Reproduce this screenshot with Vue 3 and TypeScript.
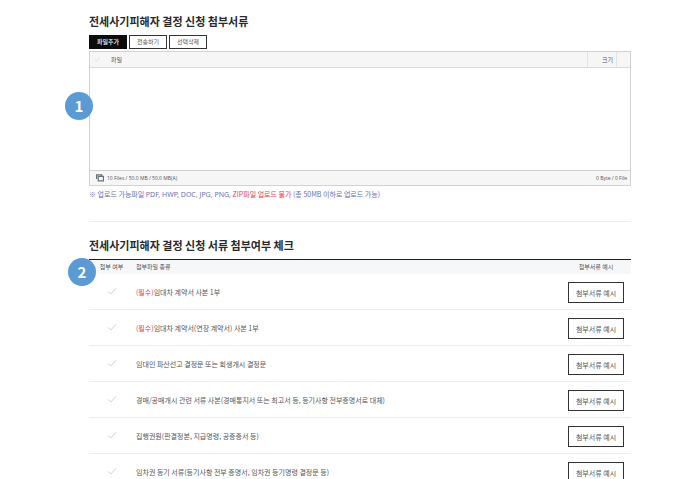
<script setup lang="ts">
import { ref } from 'vue'

interface DocumentRow {
  id: number
  required: boolean
  name: string
  attached: boolean
}

const allFiles = ref(false)

const documents = ref<DocumentRow[]>([
  { id: 1, required: true, name: '임대차 계약서 사본 1부', attached: false },
  { id: 2, required: true, name: '임대차 계약서(연장 계약서) 사본 1부', attached: false },
  { id: 3, required: false, name: '임대인 파산선고 결정문 또는 회생개시 결정문', attached: false },
  { id: 4, required: false, name: '경매/공매개시 관련 서류 사본(경매통지서 또는 최고서 등, 등기사항 전부증명서로 대체)', attached: false },
  { id: 5, required: false, name: '집행권원(판결정본, 지급명령, 공증증서 등)', attached: false },
  { id: 6, required: false, name: '임차권 등기 서류(등기사항 전부 증명서, 임차권 등기명령 결정문 등)', attached: false },
])
</script>

<template>
  <main class="page">
    <section class="upload">
      <h2 class="title">전세사기피해자 결정 신청 첨부서류</h2>
      <div class="actions">
        <button type="button" class="action primary">파일추가</button>
        <button type="button" class="action">전송하기</button>
        <button type="button" class="action">선택삭제</button>
      </div>
      <div class="uploader">
        <span class="marker marker-files">1</span>
        <div class="files-head">
          <label class="tick small" aria-label="전체 선택">
            <input v-model="allFiles" type="checkbox" />
            <svg viewBox="0 0 10 8"><path d="M1 4.2 3.8 7 9 1.2" /></svg>
          </label>
          <span class="col-file">파일</span>
          <span class="col-size">크기</span>
          <span class="col-end"></span>
        </div>
        <div class="drop"></div>
        <div class="files-foot">
          <svg class="stack" viewBox="0 0 8 8">
            <path d="M.6 5V.8H5.8V2" />
            <path d="M2.2 2.4H7.4V6.8H2.2Z" fill="#fff" />
          </svg>
          <span class="limit">10 Files / 50.0 MB / 50.0 MB(A)</span>
          <span>0 Byte / 0 File</span>
        </div>
      </div>
      <p class="note">
        ※ 업로드 가능파일 <span class="formats">PDF, HWP, DOC, JPG, PNG,</span> <em>ZIP파일 업로드 불가</em> (총 50MB 이하로 업로드 가능)
      </p>
    </section>

    <section class="check">
      <h2 class="title">전세사기피해자 결정 신청 서류 첨부여부 체크</h2>
      <div class="table-wrap">
        <span class="marker marker-check">2</span>
        <table>
          <thead>
            <tr>
              <th class="c-tick">첨부 여부</th>
              <th class="c-name">첨부파일 종류</th>
              <th class="c-sample">첨부서류 예시</th>
            </tr>
          </thead>
          <tbody>
            <tr v-for="doc in documents" :key="doc.id">
              <td class="c-tick">
                <label class="tick" :aria-label="doc.name">
                  <input v-model="doc.attached" type="checkbox" />
                  <svg viewBox="0 0 10 8"><path d="M1 4.2 3.8 7 9 1.2" /></svg>
                </label>
              </td>
              <td class="c-name"><em v-if="doc.required">(필수)</em>{{ doc.name }}</td>
              <td class="c-sample"><button type="button" class="sample">첨부서류 예시</button></td>
            </tr>
          </tbody>
        </table>
      </div>
    </section>
  </main>
</template>

<style>
body {
  background: #fff;
}
</style>

<style scoped>
.page {
  padding: 14px 66px 0 89px;
  font-family: "Noto Sans CJK KR", sans-serif;
  font-size: 7px;
  line-height: 10px;
  color: #555;
}

.title {
  margin: 0;
  font-size: 11px;
  line-height: 14px;
  font-weight: 700;
  color: #2a2a2a;
}

em {
  font-style: normal;
  color: #f0393f;
}

button {
  font-family: inherit;
  border: 1px solid #333;
  background: #fff;
  color: #555;
  padding: 0;
  cursor: pointer;
}

.actions {
  display: flex;
  gap: 2px;
  margin-top: 7px;
}

.action {
  width: 38px;
  height: 14px;
  font-size: 6px;
  line-height: 10px;
}

.action.primary {
  border-color: #0c0c0c;
  background: #0c0c0c;
  color: #fff;
  font-weight: 500;
}

.uploader {
  position: relative;
  margin-top: 2px;
  border: 1px solid #d0d2d4;
  font-size: 6px;
}

.files-head {
  display: flex;
  align-items: stretch;
  height: 15px;
  line-height: 15px;
  background: #f6f6f6;
  border-bottom: 1px solid #d8dadb;
}

.col-file {
  flex: 1;
  padding-left: 8px;
}

.col-size {
  width: 29px;
  padding-right: 3px;
  box-sizing: border-box;
  text-align: right;
  border-left: 1px solid #e2e3e4;
}

.col-end {
  width: 13px;
  border-left: 1px solid #e2e3e4;
}

.drop {
  height: 102px;
}

.files-foot {
  display: flex;
  align-items: center;
  height: 14px;
  padding: 0 3px 0 6px;
  background: #f6f6f6;
  border-top: 1px solid #d0d2d4;
  font-family: "Open Sans", sans-serif;
  font-size: 5px;
  color: #555;
}

.stack {
  width: 8px;
  height: 8px;
  margin-right: 3px;
  fill: none;
  stroke: #667078;
  stroke-width: 1.2;
}

.limit {
  flex: 1;
}

.note {
  margin: 3px 0 0;
  padding-bottom: 21px;
  border-bottom: 1px solid #eee;
  color: #6670bd;
}

.formats {
  font-family: "Noto Sans", sans-serif;
}

.check {
  margin-top: 16px;
}

.table-wrap {
  position: relative;
  margin-top: 7px;
}

table {
  width: 100%;
  border-collapse: separate;
  border-spacing: 0;
  border-top: 1px solid #222;
}

th {
  height: 14px;
  padding: 0;
  background: #f6f7f9;
  font-size: 6px;
  font-weight: 400;
}

td {
  height: 35px;
  padding: 0;
  border-bottom: 1px solid #eee;
}

.c-tick {
  width: 45px;
  padding-right: 2px;
  text-align: center;
}

.c-name {
  text-align: left;
}

.c-sample {
  width: 70px;
  text-align: center;
}

.sample {
  display: block;
  width: 56px;
  height: 21px;
  margin: 2px auto 0;
  font-size: 7px;
  line-height: 10px;
}

.tick {
  display: inline-grid;
  place-items: center;
  vertical-align: top;
  cursor: pointer;
}

.tick input {
  grid-area: 1 / 1;
  width: 10px;
  height: 8px;
  margin: 0;
  appearance: none;
}

.tick svg {
  grid-area: 1 / 1;
  width: 10px;
  height: 8px;
  fill: none;
  stroke: #d2d3d4;
  stroke-width: 1;
  pointer-events: none;
}

.tick input:checked + svg {
  stroke: #222;
}

.tick.small {
  width: 13px;
}

.tick.small svg {
  width: 6px;
  height: 5px;
}

.marker {
  position: absolute;
  display: grid;
  place-items: center;
  width: 28px;
  height: 28px;
  border-radius: 50%;
  background: #5b9bd5;
  color: #fff;
  font-size: 15px;
  font-weight: 700;
  line-height: 28px;
}

.marker-files {
  left: -25px;
  top: 40px;
}

.marker-check {
  left: -21px;
  top: -1px;
}
</style>
